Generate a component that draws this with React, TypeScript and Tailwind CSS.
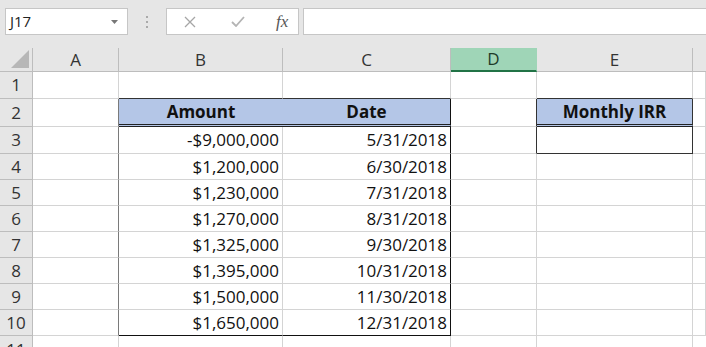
import { useState } from "react";

const cols = ["A", "B", "C", "D", "E"];

const data: [string, string][] = [
    ["-$9,000,000", "5/31/2018"],
    ["$1,200,000", "6/30/2018"],
    ["$1,230,000", "7/31/2018"],
    ["$1,270,000", "8/31/2018"],
    ["$1,325,000", "9/30/2018"],
    ["$1,395,000", "10/31/2018"],
    ["$1,500,000", "11/30/2018"],
    ["$1,650,000", "12/31/2018"],
];

function FormulaBar() {
    return (
        <div className="h-[48px] bg-[#e6e6e6] flex items-start pt-[8px] pl-[5px]">
            {/* Name box */}
            <div className="w-[123px] h-[27px] bg-white border border-[#c6c6c6] flex items-center justify-between pl-[4px] pr-[9px]">
                <span className="text-[15px] text-[#222]">J17</span>
                <svg width="7" height="4" viewBox="0 0 7 4">
                    <path d="M0 0 L7 0 L3.5 4 Z" fill="#777" />
                </svg>
            </div>
            <div className="w-[38px] h-[27px] flex flex-col items-center justify-center gap-[3px]">
                <span className="w-[2px] h-[2px] bg-[#aaa]" />
                <span className="w-[2px] h-[2px] bg-[#aaa]" />
                <span className="w-[2px] h-[2px] bg-[#aaa]" />
            </div>
            {/* Cancel / enter / fx */}
            <div className="w-[133px] h-[27px] bg-white border border-[#c6c6c6] flex items-center">
                <svg className="ml-[17px]" width="12" height="12" viewBox="0 0 12 12">
                    <path d="M1 1 L11 11 M11 1 L1 11" stroke="#a6a6a6" strokeWidth="1.3" fill="none" />
                </svg>
                <svg className="ml-[35px]" width="14" height="11" viewBox="0 0 14 11">
                    <path d="M1 6 L5 10 L13 1" stroke="#b4b4b4" strokeWidth="1.8" fill="none" />
                </svg>
                <span className="ml-[31px] text-[17px] italic text-[#555] font-['Liberation_Serif',serif]">fx</span>
            </div>
            <div className="ml-[4px] flex-1 h-[27px] bg-white border border-[#c6c6c6] border-r-0" />
        </div>
    );
}

function Cell(props: { className?: string; children?: React.ReactNode }) {
    return <div className={"box-border " + (props.className ?? "")}>{props.children}</div>;
}

const App = () => {
    const [active] = useState("D");
    const grid = "border-r border-b border-[#d4d4d4]";
    const rowHead = "bg-[#e6e6e6] border-r border-b border-[#bdbdbd] flex items-center justify-center text-[17px] text-[#333]";

    return (
        <div className="w-[706px] h-[347px] overflow-hidden bg-white font-['Open_Sans',sans-serif] text-[#111]">
            <FormulaBar />

            <div className="grid grid-cols-[33px_86px_164px_168px_86px_156px_1fr] grid-rows-[24px_27px_28px_27px_26px_26px_26px_26px_26px_26px_26px_20px]">
                {/* Column headers */}
                <Cell className="bg-[#e6e6e6] border-r border-b border-[#bdbdbd] flex items-end justify-end p-[3px]">
                    <svg width="18" height="18" viewBox="0 0 18 18">
                        <path d="M18 0 L18 18 L0 18 Z" fill="#b7b7b7" />
                    </svg>
                </Cell>
                {cols.map((c) => (
                    <Cell
                        key={c}
                        className={
                            c === active
                                ? "bg-[#9fd5b7] border-r border-b-2 border-b-[#217346] border-r-[#9fd5b7] flex items-center justify-center text-[17px] text-[#1e3b2a]"
                                : "bg-[#e6e6e6] border-r border-b border-[#bdbdbd] flex items-center justify-center text-[17px] text-[#333]"
                        }
                    >
                        {c}
                    </Cell>
                ))}
                <Cell className="bg-[#e6e6e6] border-b border-[#bdbdbd]" />

                {/* Row 1 */}
                <Cell className={rowHead}>1</Cell>
                <Cell className={grid} />
                <Cell className="border-r border-[#d4d4d4] border-b border-b-[#333]" />
                <Cell className="border-r border-[#d4d4d4] border-b border-b-[#333]" />
                <Cell className={grid} />
                <Cell className="border-r border-[#d4d4d4] border-b border-b-[#333]" />
                <Cell className={grid} />

                {/* Row 2: headers */}
                <Cell className={rowHead}>2</Cell>
                <Cell className="border-r border-r-[#7a7a7a] border-b border-b-[#d4d4d4]" />
                <Cell className="bg-[#b4c6e7] border-b-[3px] border-double border-[#222] flex items-center justify-center text-[17px] font-bold">Amount</Cell>
                <Cell className="bg-[#b4c6e7] border-r border-r-[#111] border-b-[3px] border-b-[#222] border-double flex items-center justify-center text-[17px] font-bold">Date</Cell>
                <Cell className="border-r border-r-[#333] border-b border-b-[#d4d4d4]" />
                <Cell className="bg-[#b4c6e7] border-r border-r-[#333] border-b-[3px] border-b-[#222] border-double flex items-center justify-center text-[17px] font-bold">Monthly IRR</Cell>
                <Cell className={grid} />

                {/* Rows 3-10 */}
                {data.map(([amt, date], i) => {
                    const last = i === data.length - 1;
                    return [
                        <Cell key={"h" + i} className={rowHead}>{i + 3}</Cell>,
                        <Cell key={"a" + i} className="border-r border-r-[#7a7a7a] border-b border-b-[#d4d4d4]" />,
                        <Cell key={"b" + i} className={"border-r border-r-[#d4d4d4] border-b flex items-center justify-end pr-[3px] text-[17px] " + (last ? "border-b-[#111]" : "border-b-[#d4d4d4]")}>{amt}</Cell>,
                        <Cell key={"c" + i} className={"border-r border-r-[#111] border-b flex items-center justify-end pr-[3px] text-[17px] " + (last ? "border-b-[#111]" : "border-b-[#d4d4d4]")}>{date}</Cell>,
                        <Cell key={"d" + i} className={i === 0 ? "border-r border-r-[#333] border-b border-b-[#d4d4d4]" : grid} />,
                        <Cell key={"e" + i} className={i === 0 ? "border-r border-r-[#333] border-b border-b-[#333]" : grid} />,
                        <Cell key={"f" + i} className={grid} />,
                    ];
                })}

                {/* Row 11 */}
                <Cell className="bg-[#e6e6e6] border-r border-[#bdbdbd] flex items-start justify-center text-[17px] leading-none text-[#333] pt-[5px]">11</Cell>
                <Cell className="border-r border-[#d4d4d4]" />
                <Cell className="border-r border-[#d4d4d4]" />
                <Cell className="border-r border-[#d4d4d4]" />
                <Cell className="border-r border-[#d4d4d4]" />
                <Cell className="border-r border-[#d4d4d4]" />
                <Cell />
            </div>
        </div>
    );
};

export default App;
